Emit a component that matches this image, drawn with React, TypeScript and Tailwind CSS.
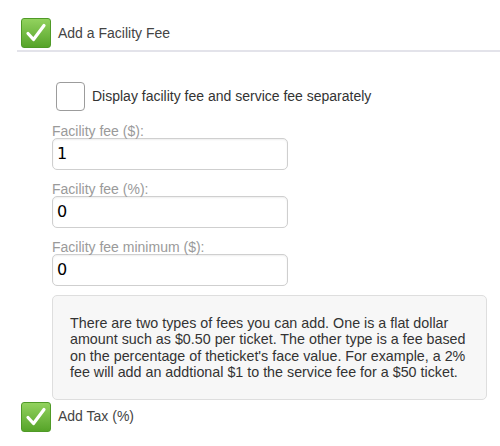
import React from "react";

const GreenCheck = () => (
  <div className="w-[30px] h-[30px] rounded-[3px] border border-[#4f9a27] bg-gradient-to-b from-[#92d25e] to-[#56a428] flex items-center justify-center shrink-0">
    <svg width="24" height="24" viewBox="0 0 24 24">
      <path d="M4 12.5 L9.5 18.5 L20 4.5" fill="none" stroke="#fff" strokeWidth="3.2" strokeLinecap="round" strokeLinejoin="round" />
    </svg>
  </div>
);

const Field = ({ label, value }: { label: string; value: string }) => (
  <div>
    <div className="text-[14px] leading-4 text-[#9a9a9a]">{label}</div>
    <div className="mt-[-1px] w-[236px] h-[32px] rounded-[5px] border border-[#cfcfcf] bg-white shadow-[inset_0_1px_2px_rgba(0,0,0,0.07)] flex items-center pl-[4px] font-['DejaVu_Sans',sans-serif] text-[16px] text-black">
      {value}
    </div>
  </div>
);

export default function App() {
  return (
    <div className="w-[500px] h-[446px] bg-white font-['Liberation_Sans',Arial,sans-serif] overflow-hidden">
      <div className="pl-[17px]">
        {/* Header */}
        <div className="pt-[18px] pb-[2px] pl-[4px] border-b-2 border-[#e3e3ea] flex items-center gap-[7px]">
          <GreenCheck />
          <span className="text-[14px] text-[#444]">Add a Facility Fee</span>
        </div>

        <div className="pl-[35px]">
          {/* Separate fees option */}
          <div className="mt-[30px] ml-[4px] flex items-center gap-[7px]">
            <div className="w-[29px] h-[29px] rounded-[4px] border-[1.5px] border-[#9c9c9c] bg-white" />
            <span className="text-[14px] text-[#333]">Display facility fee and service fee separately</span>
          </div>

          <div className="mt-[12px] flex flex-col gap-[11px]">
            <Field label="Facility fee ($):" value="1" />
            <Field label="Facility fee (%):" value="0" />
            <Field label="Facility fee minimum ($):" value="0" />
          </div>

          {/* Info */}
          <div className="mt-[9px] w-[435px] rounded-[5px] border border-[#dedede] bg-[#f7f7f7] pl-[17px] pr-[12px] pt-[19px] pb-[18px] text-[14.3px] leading-[16.4px] text-[#333]">
            There are two types of fees you can add. One is a flat dollar amount such as $0.50 per ticket. The other type is a fee based on the percentage of theticket's face value. For example, a 2% fee will add an addtional $1 to the service fee for a $50 ticket.
          </div>
        </div>

        {/* Tax */}
        <div className="mt-[2px] pl-[4px] flex items-center gap-[7px]">
          <GreenCheck />
          <span className="text-[14px] text-[#444]">Add Tax (%)</span>
        </div>
      </div>
    </div>
  );
}
